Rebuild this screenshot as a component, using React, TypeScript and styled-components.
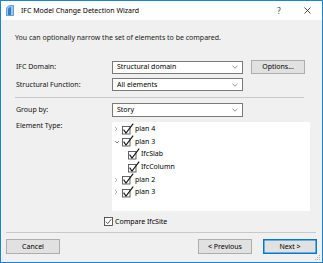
import React from "react";
import styled, { createGlobalStyle } from "styled-components";

const Global = createGlobalStyle`
  html, body { margin: 0; padding: 0; background: #ffffff; }
  body { font-family: "Noto Sans", "Open Sans", "Liberation Sans", sans-serif; font-size: 7px; color: #000; }
  * { box-sizing: border-box; }
`;

const Window = styled.div`
  position: relative;
  width: 323px;
  height: 263px;
  border: 1px solid #1883d7;
  display: flex;
  flex-direction: column;
  background: #f0f0f0;
`;

const TitleBar = styled.div`
  height: 19px;
  background: #ffffff;
  display: flex;
  align-items: center;
  padding-left: 5px;
  flex-shrink: 0;
`;

const TitleText = styled.span`
  margin-left: 7px;
  font-size: 7px;
  line-height: 10px;
  color: #000;
  flex: 1;
`;

const TitleBtn = styled.div<{ $w: number }>`
  width: ${(p) => p.$w}px;
  height: 19px;
  display: flex;
  align-items: center;
  justify-content: center;
  color: #333;
`;

const Body = styled.div`
  flex: 1;
  display: flex;
  flex-direction: column;
  padding: 13px 5px 8px 5px;
`;

const Upper = styled.div`
  display: flex;
  flex-direction: column;
  padding-left: 9px;
  padding-right: 13px;
`;

const Intro = styled.div`
  line-height: 10px;
  height: 10px;
  color: #1a1a1a;
`;

const Row = styled.div<{ $mt: number; $h: number }>`
  display: grid;
  grid-template-columns: 89px 131px 59px;
  column-gap: 8px;
  align-items: center;
  margin-top: ${(p) => p.$mt}px;
  height: ${(p) => p.$h}px;
`;

const Label = styled.div<{ $top?: boolean }>`
  padding-left: 1px;
  line-height: 10px;
  color: #111;
  align-self: ${(p) => (p.$top ? "start" : "center")};
  margin-top: ${(p) => (p.$top ? "-1px" : "0")};
`;

const Combo = styled.div<{ $h: number }>`
  height: ${(p) => p.$h}px;
  background: #ffffff;
  border: 1px solid #7a7a7a;
  display: flex;
  align-items: center;
  justify-content: space-between;
  padding: 0 4px 0 4px;
  line-height: 10px;
  color: #000;
`;

const Button = styled.button<{ $primary?: boolean }>`
  font-family: inherit;
  font-size: 7px;
  color: #000;
  background: #e1e1e1;
  border: 1px solid ${(p) => (p.$primary ? "#0078d7" : "#adadad")};
  box-shadow: ${(p) => (p.$primary ? "inset 0 0 0 0.5px #0078d7" : "none")};
  padding: 0;
  height: 100%;
  line-height: 10px;
  width: 54px;
`;

const Separator = styled.div<{ $mt: number; $mr?: number }>`
  height: 1px;
  background: #c8c8c8;
  margin-top: ${(p) => p.$mt}px;
  margin-right: ${(p) => p.$mr ?? 0}px;
`;

const Tree = styled.div`
  grid-column: 2 / 4;
  height: 89px;
  background: #ffffff;
  padding-top: 0.7px;
  align-self: start;
`;

const TreeRow = styled.div<{ $indent: number }>`
  height: 12.7px;
  display: flex;
  align-items: center;
  padding-left: ${(p) => 2 + p.$indent}px;
  line-height: 10px;
`;

const Chevron = styled.span`
  width: 8px;
  height: 8px;
  display: flex;
  align-items: center;
  flex-shrink: 0;
`;

const TreeText = styled.span`
  margin-left: 1px;
  color: #000;
`;

const CompareRow = styled.div`
  display: flex;
  align-items: center;
  margin-top: 6px;
  height: 9px;
  margin-left: 89px;
  gap: 2px;
`;

const Footer = styled.div`
  display: flex;
  align-items: stretch;
  margin-top: 6px;
  height: 15px;
`;

const Spacer = styled.div`
  flex: 1;
`;

const ButtonGap = styled.div`
  width: 11px;
`;

const Grip = styled.svg`
  position: absolute;
  right: 1px;
  bottom: 1px;
`;

const ComboArrow = () => (
  <svg width="6" height="4" viewBox="0 0 6 4">
    <path d="M0.5 0.8 L3 3.2 L5.5 0.8" fill="none" stroke="#7a7a7a" strokeWidth="0.8" />
  </svg>
);

const TreeCheck = () => (
  <svg width="12" height="12" viewBox="0 0 12 12" style={{ flexShrink: 0, marginTop: "-1px" }}>
    <rect x="0.5" y="3.5" width="7.5" height="7.5" fill="#fff" stroke="#555" strokeWidth="0.9" />
    <path d="M1.6 6.6 L4 10 L11.2 0.6" fill="none" stroke="#111" strokeWidth="1.1" />
  </svg>
);

const ChevRight = () => (
  <svg width="4" height="6" viewBox="0 0 4 6">
    <path d="M1 1 L3 3 L1 5" fill="none" stroke="#9a9a9a" strokeWidth="0.8" />
  </svg>
);
const ChevDown = () => (
  <svg width="6" height="4" viewBox="0 0 6 4">
    <path d="M1 1 L3 3 L5 1" fill="none" stroke="#6a6a6a" strokeWidth="0.8" />
  </svg>
);

const Field = ({ text, h }: { text: string; h: number }) => (
  <Combo $h={h}>
    <span>{text}</span>
    <ComboArrow />
  </Combo>
);

type Node = { label: string; level: number; expanded?: boolean; leaf?: boolean };
const nodes: Node[] = [
  { label: "plan 4", level: 0 },
  { label: "plan 3", level: 0, expanded: true },
  { label: "IfcSlab", level: 1, leaf: true },
  { label: "IfcColumn", level: 1, leaf: true },
  { label: "plan 2", level: 0 },
  { label: "plan 3", level: 0 },
];

export default function App() {
  return (
    <>
      <Global />
      <Window>
        <TitleBar>
          <svg width="8" height="11" viewBox="0 0 8 11">
            <path d="M0.5 10.5 L0.5 3 Q2 0.5 4 0.5 L7.5 0.5 L7.5 10.5 Z" fill="#9cc8ee" stroke="#3b7fc4" strokeWidth="0.7" />
            <path d="M2 10 L2 4 Q3 2 5 2 L5 10 Z" fill="#2f7fd0" />
          </svg>
          <TitleText>IFC Model Change Detection Wizard</TitleText>
          <TitleBtn $w={28}>
            <span style={{ fontSize: "8px", color: "#444" }}>?</span>
          </TitleBtn>
          <TitleBtn $w={29}>
            <svg width="7" height="7" viewBox="0 0 7 7">
              <path d="M0.5 0.5 L6.5 6.5 M6.5 0.5 L0.5 6.5" stroke="#222" strokeWidth="0.8" />
            </svg>
          </TitleBtn>
        </TitleBar>
        <Body>
          <Upper>
            <Intro>You can optionally narrow the set of elements to be compared.</Intro>
            <Row $mt={17} $h={14}>
              <Label>IFC Domain:</Label>
              <Field text="Structural domain" h={13} />
              <Button>Options...</Button>
            </Row>
            <Row $mt={4} $h={13}>
              <Label>Structural Function:</Label>
              <Field text="All elements" h={13} />
            </Row>
            <Separator $mt={6} />
            <Row $mt={5} $h={14}>
              <Label>Group by:</Label>
              <Field text="Story" h={14} />
            </Row>
            <Row $mt={5} $h={89}>
              <Label $top>Element Type:</Label>
              <Tree>
                {nodes.map((n, i) => (
                  <TreeRow key={i} $indent={n.level * 6}>
                    <Chevron>{n.leaf ? null : n.expanded ? <ChevDown /> : <ChevRight />}</Chevron>
                    <TreeCheck />
                    <TreeText>{n.label}</TreeText>
                  </TreeRow>
                ))}
              </Tree>
            </Row>
            <CompareRow>
              <svg width="9" height="9" viewBox="0 0 9 9">
                <rect x="0.5" y="0.5" width="8" height="8" fill="#fff" stroke="#333" strokeWidth="0.8" />
                <path d="M1.8 4.6 L3.7 6.6 L7.3 2.2" fill="none" stroke="#333" strokeWidth="0.8" />
              </svg>
              <span style={{ lineHeight: "10px" }}>Compare IfcSite</span>
            </CompareRow>
          </Upper>
          <Separator $mt={6} $mr={1} />
          <Footer>
            <Button>Cancel</Button>
            <Spacer />
            <Button>&lt; Previous</Button>
            <ButtonGap />
            <Button $primary>Next &gt;</Button>
          </Footer>
        </Body>
        <Grip width="7" height="7" viewBox="0 0 7 7">
          <rect x="5" y="1" width="1" height="1" fill="#b0b0b0" />
          <rect x="3" y="3" width="1" height="1" fill="#b0b0b0" />
          <rect x="5" y="3" width="1" height="1" fill="#b0b0b0" />
          <rect x="1" y="5" width="1" height="1" fill="#b0b0b0" />
          <rect x="3" y="5" width="1" height="1" fill="#b0b0b0" />
          <rect x="5" y="5" width="1" height="1" fill="#b0b0b0" />
        </Grip>
      </Window>
    </>
  );
}
